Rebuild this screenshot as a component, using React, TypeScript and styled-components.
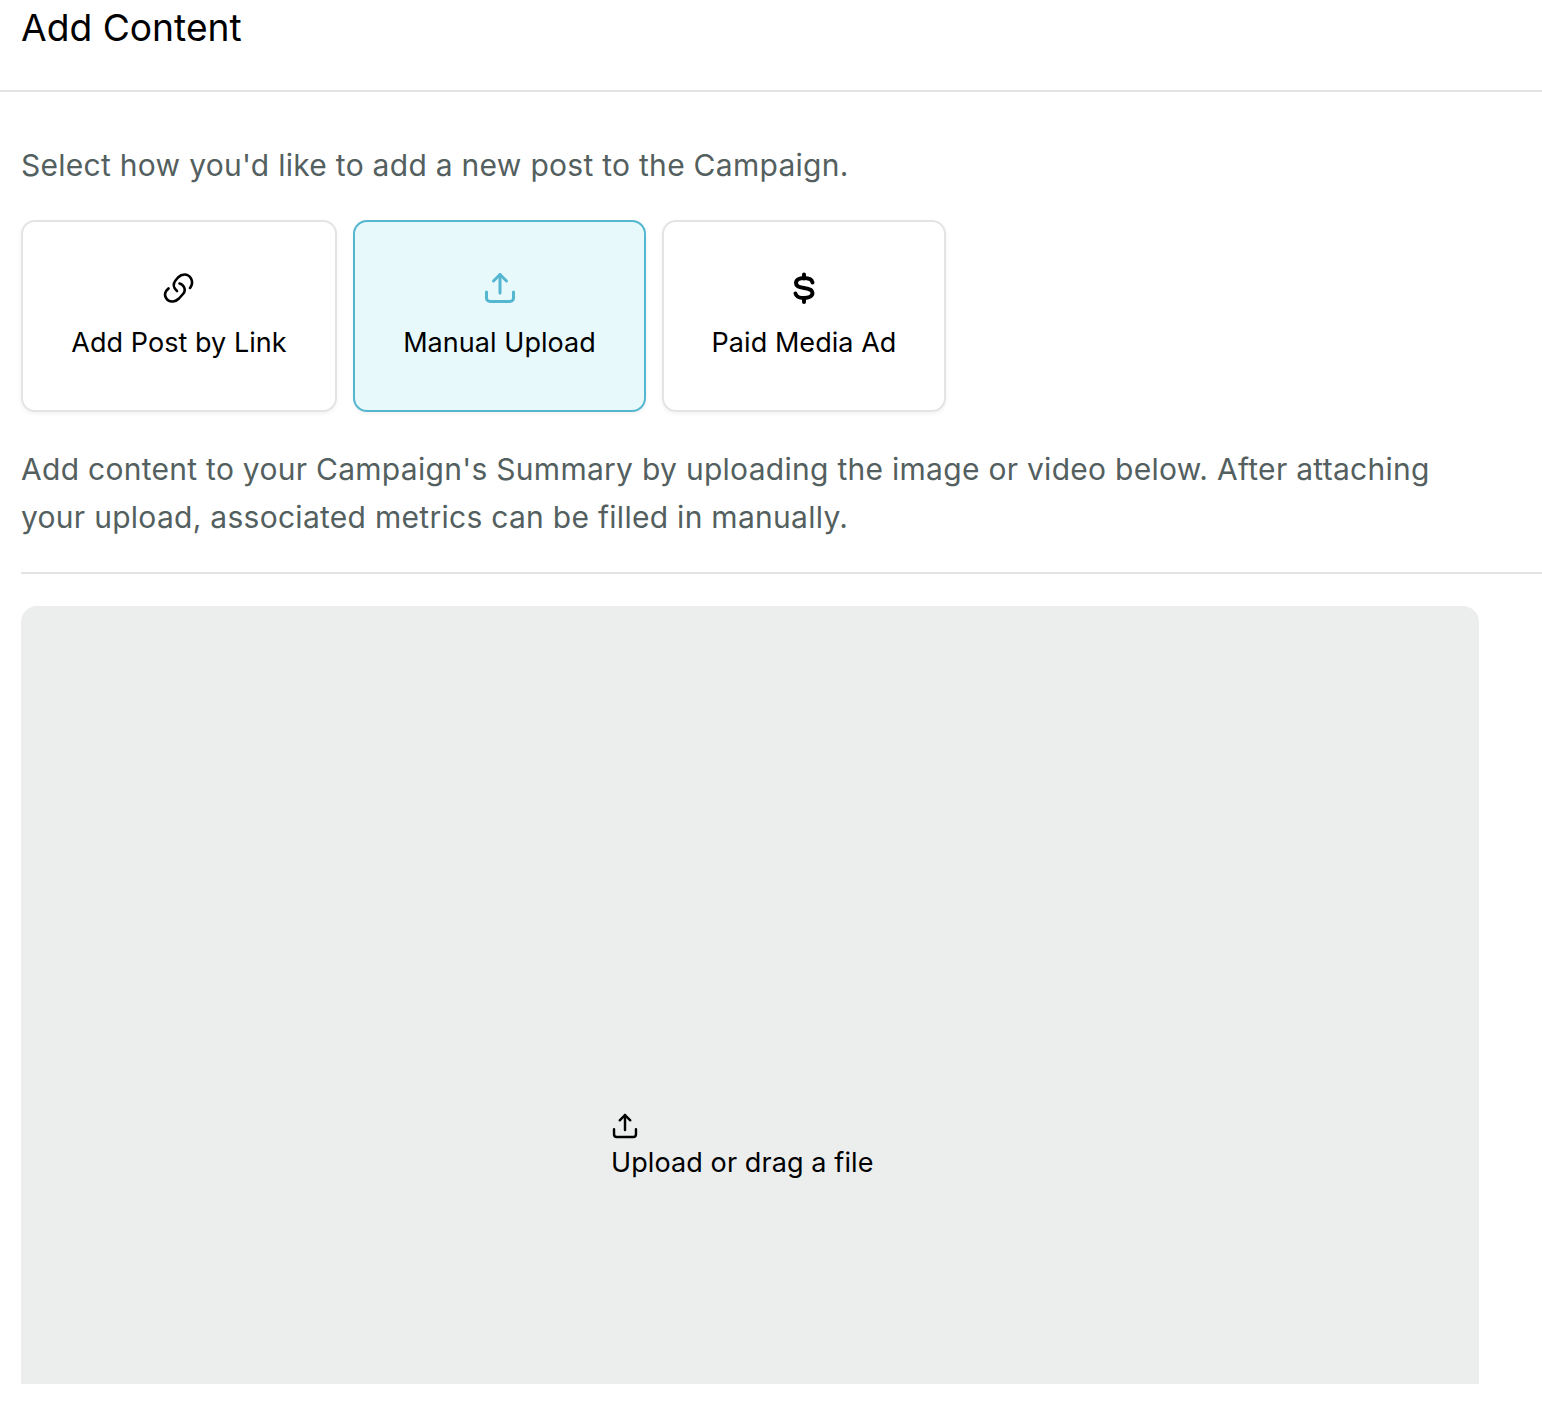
import React from 'react'
import styled, { createGlobalStyle } from 'styled-components'

const GlobalStyle = createGlobalStyle`
  html, body {
    margin: 0;
    padding: 0;
    background: #fff;
    font-family: Inter, "Liberation Sans", sans-serif;
  }
`

const Page = styled.div`
  width: 1542px;
  height: 1422px;
  overflow: hidden;
`

const Header = styled.header`
  height: 90px;
  box-sizing: content-box;
  padding-left: 21px;
  border-bottom: 2px solid #e3e5e5;
`

const Title = styled.h1`
  margin: 0;
  font-size: 37.2px;
  line-height: 56px;
  font-weight: 400;
  color: #000;
`

const Body = styled.main`
  padding: 49px 0 0 21px;
`

const Hint = styled.p`
  margin: 0;
  font-size: 30px;
  line-height: 48px;
  letter-spacing: 0.28px;
  color: #545f5f;
`

const Options = styled.div`
  display: flex;
  gap: 16px;
  margin-top: 31px;
`

const Option = styled.button<{ $active?: boolean; $width: number }>`
  width: ${(p) => p.$width}px;
  height: 192px;
  box-sizing: border-box;
  padding: 3px 0 0;
  display: flex;
  flex-direction: column;
  align-items: center;
  justify-content: center;
  gap: 19px;
  font-family: inherit;
  font-size: 27px;
  line-height: 40px;
  letter-spacing: 0.05px;
  color: #000;
  background: ${(p) => (p.$active ? '#e8f9fc' : '#fff')};
  border: 2px solid ${(p) => (p.$active ? '#55b6cf' : '#e3e5e5')};
  border-radius: 14px;
  box-shadow: 0 2px 4px rgba(0, 0, 0, 0.05);
`

const Description = styled(Hint)`
  margin-top: 33px;
  width: 1440px;
`

const Rule = styled.hr`
  margin: 31px 0 0;
  border: 0;
  border-top: 2px solid #e3e5e5;
`

const Dropzone = styled.div`
  margin-top: 32px;
  width: 1458px;
  height: 778px;
  background: #eceeee;
  border-radius: 16px 16px 0 0;
  display: flex;
  flex-direction: column;
  align-items: flex-start;
  justify-content: flex-end;
  padding: 0 0 201px 590px;
  box-sizing: border-box;
`

const DropIcon = styled.span`
  display: block;
  margin-left: 1px;
`

const DropLabel = styled.span`
  margin-top: 4px;
  font-size: 27px;
  line-height: 40px;
  letter-spacing: 0.1px;
  color: #000;
`

const IconSvg = styled.svg<{ $color?: string }>`
  display: block;
  color: ${(p) => p.$color ?? '#000'};
`

const LinkIcon = () => (
  <IconSvg width="32" height="32" viewBox="0 0 32 32" fill="none" stroke="currentColor" strokeWidth="2.6" strokeLinecap="round" strokeLinejoin="round">
    <path d="M27 16l1-1.500C31 9 27 2.500 21.500 2.500c-2.500 0-4.500 1-6.500 3l-2.500 3c-2.500 3-2.500 7 1.500 10.500" />
    <path d="M5.500 16.500l-2 2C0 23 3.500 30 10 29.500c2.500-.2 4.500-1.500 6-3l4-4.500c4-4.500 0-10-3.500-10.500" />
  </IconSvg>
)

const UploadIcon = ({ color, size = 32 }: { color?: string; size?: number }) => (
  <IconSvg $color={color} width={size} height={size} viewBox="0 0 32 32" fill="none" stroke="currentColor" strokeWidth="3" strokeLinecap="round" strokeLinejoin="round">
    <path d="M16 21V2.500" />
    <path d="M9.500 9L16 2.500 22.500 9" />
    <path d="M2.500 20v6a3.500 3.500 0 0 0 3.500 3.500h20a3.500 3.500 0 0 0 3.500-3.500v-6" />
  </IconSvg>
)

const DollarIcon = () => (
  <IconSvg width="32" height="32" viewBox="0 0 32 32" fill="none" stroke="currentColor" strokeWidth="4" strokeLinecap="round" strokeLinejoin="round">
    <path d="M16 2.500v4M16 26v4" />
    <path d="M24.500 10.500C24 7.800 21 6 16 6c-5 0-8 2-8 5s3 4.400 8 5c5 .6 8.500 2 8.500 5s-3.500 5-8.500 5c-5 0-8-1.800-8.500-4.500" />
  </IconSvg>
)

export default function App() {
  return (
    <Page>
      <GlobalStyle />
      <Header>
        <Title>Add Content</Title>
      </Header>
      <Body>
        <Hint>Select how you'd like to add a new post to the Campaign.</Hint>
        <Options>
          <Option $width={316}>
            <LinkIcon />
            Add Post by Link
          </Option>
          <Option $width={293} $active>
            <UploadIcon color="#55b6cf" />
            Manual Upload
          </Option>
          <Option $width={284}>
            <DollarIcon />
            Paid Media Ad
          </Option>
        </Options>
        <Description>
          Add content to your Campaign's Summary by uploading the image or video below. After attaching your upload, associated metrics can be filled in manually.
        </Description>
        <Rule />
        <Dropzone>
          <DropIcon>
            <UploadIcon size={26} />
          </DropIcon>
          <DropLabel>Upload or drag a file</DropLabel>
        </Dropzone>
      </Body>
    </Page>
  )
}
